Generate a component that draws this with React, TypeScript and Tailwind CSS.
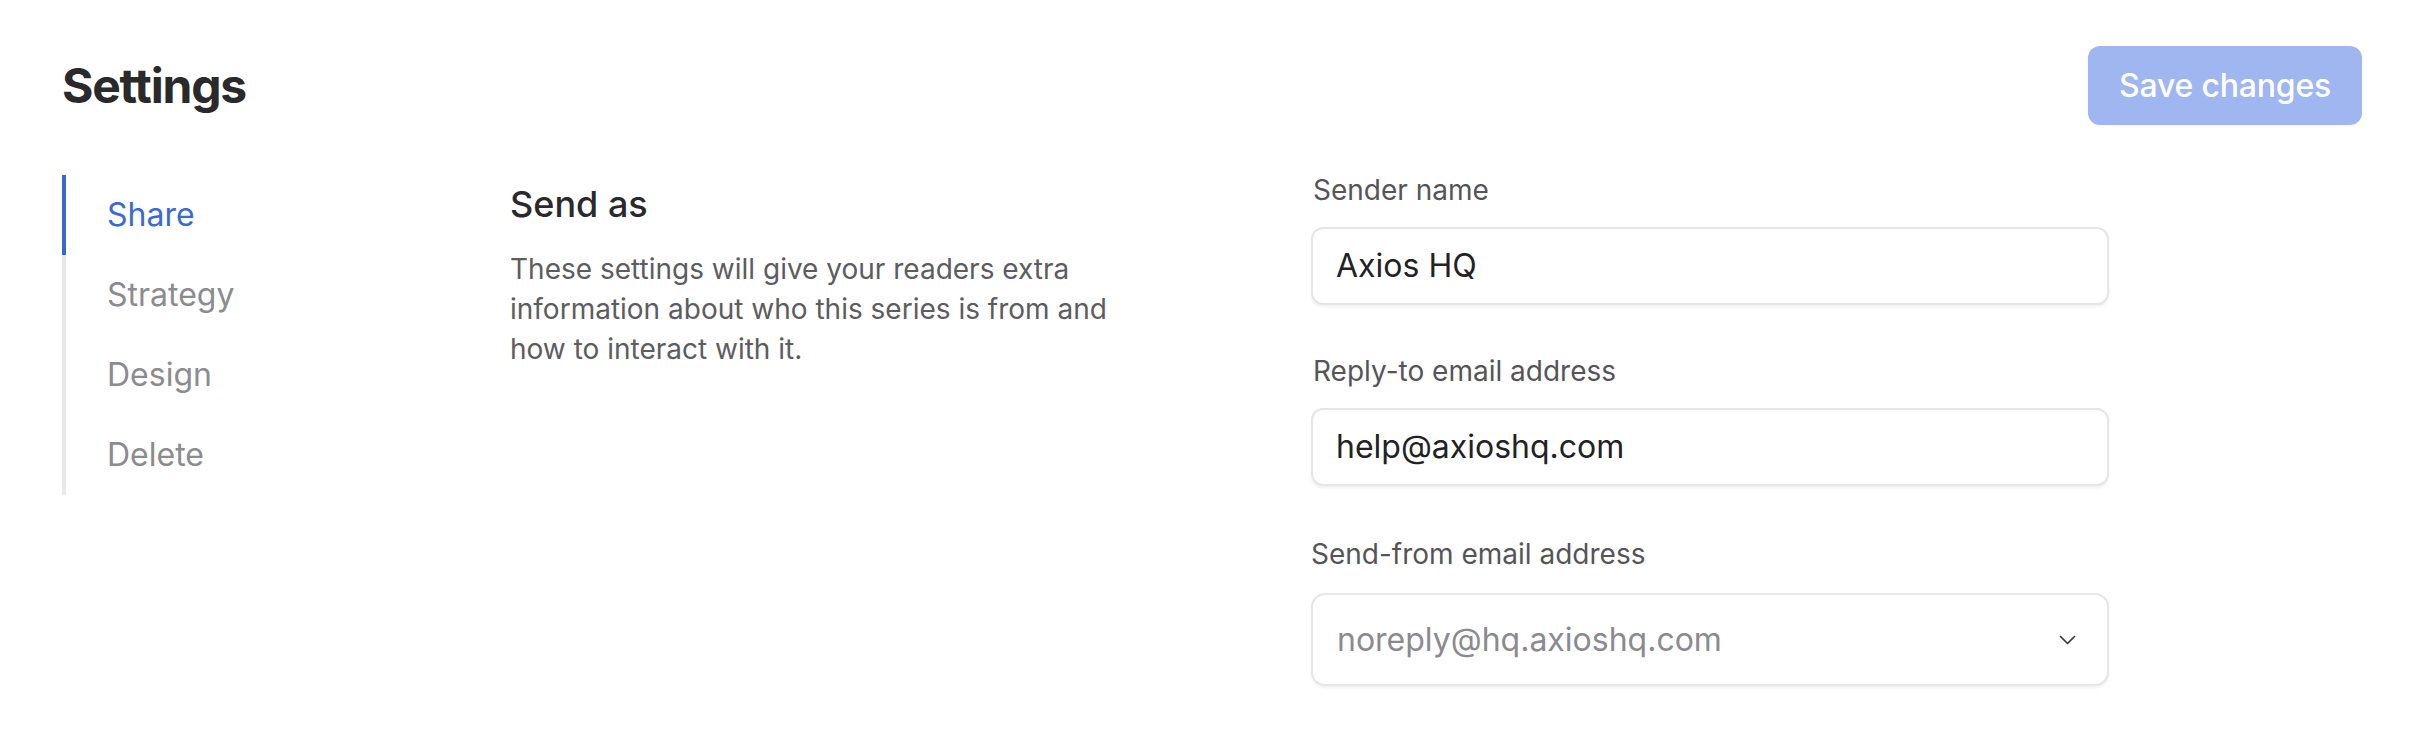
import React from 'react';

const navItems = ['Share', 'Strategy', 'Design', 'Delete'];

const Field: React.FC<{ label: string; value: string; className?: string }> = ({ label, value, className }) => (
  <div className={className}>
    <label className="block text-[28px] leading-[40px] text-[#555559] pl-[2px]">{label}</label>
    <div className="mt-[17px] h-[78px] w-[798px] rounded-[12px] border-2 border-[#e6e6e9] bg-white shadow-[0_2px_3px_rgba(0,0,0,0.06)] flex items-center px-[23px]">
      <span className="text-[32px] text-[#222225]">{value}</span>
    </div>
  </div>
);

const App: React.FC = () => {
  const active = 'Share';

  return (
    <div className="min-h-screen w-full bg-white px-[62px] pt-[46px] font-['Inter',sans-serif]">
      {/* Header */}
      <div className="flex items-center justify-between">
        <h1 className="text-[48px] font-bold text-[#2a2a2d] tracking-[-1.2px]">Settings</h1>
        <button className="h-[79px] w-[274px] rounded-[12px] bg-[#9fb6f1] text-white text-[32px] font-medium tracking-[-0.2px]">
          Save changes
        </button>
      </div>

      {/* Body */}
      <div className="mt-[45px] flex">
        {/* Side nav */}
        <nav className="w-[448px] shrink-0 mt-[5px]">
          {navItems.map((item) => (
            <div
              key={item}
              className={`h-[80px] flex items-center pl-[41px] border-l-4 text-[32px] ${
                item === active ? 'border-[#3b67d2] text-[#3b6ad6]' : 'border-[#e8e8ec] text-[#8b8b90]'
              }`}
            >
              {item}
            </div>
          ))}
        </nav>

        {/* Description */}
        <div className="w-[801px] shrink-0 pt-[10px]">
          <h2 className="text-[36px] leading-[48px] font-medium text-[#2a2a2d]">Send as</h2>
          <p className="mt-[21px] w-[610px] text-[28px] leading-[40px] text-[#5c5c61]">
            These settings will give your readers extra information about who this series is from and how to interact with it.
          </p>
        </div>

        {/* Form */}
        <div className="w-[800px]">
          <Field label="Sender name" value="Axios HQ" />
          <Field label="Reply-to email address" value="help@axioshq.com" className="mt-[46px]" />
          <div className="mt-[48px]">
            <label className="block text-[28px] leading-[40px] text-[#555559]">Send-from email address</label>
            <div className="mt-[19px] h-[93px] w-[798px] rounded-[14px] border-2 border-[#e6e6e9] bg-white shadow-[0_2px_3px_rgba(0,0,0,0.06)] flex items-center justify-between pl-[24px] pr-[31px]">
              <span className="text-[32px] text-[#8a8a8f]">noreply@hq.axioshq.com</span>
              <svg className="w-[17px] h-[10px]" viewBox="0 0 17 10" fill="none" stroke="#333336" strokeWidth={1.6} strokeLinecap="round" strokeLinejoin="round">
                <path d="M1.5 1.5 L8.5 8.5 L15.5 1.5" />
              </svg>
            </div>
          </div>
        </div>
      </div>
    </div>
  );
};

export default App;
